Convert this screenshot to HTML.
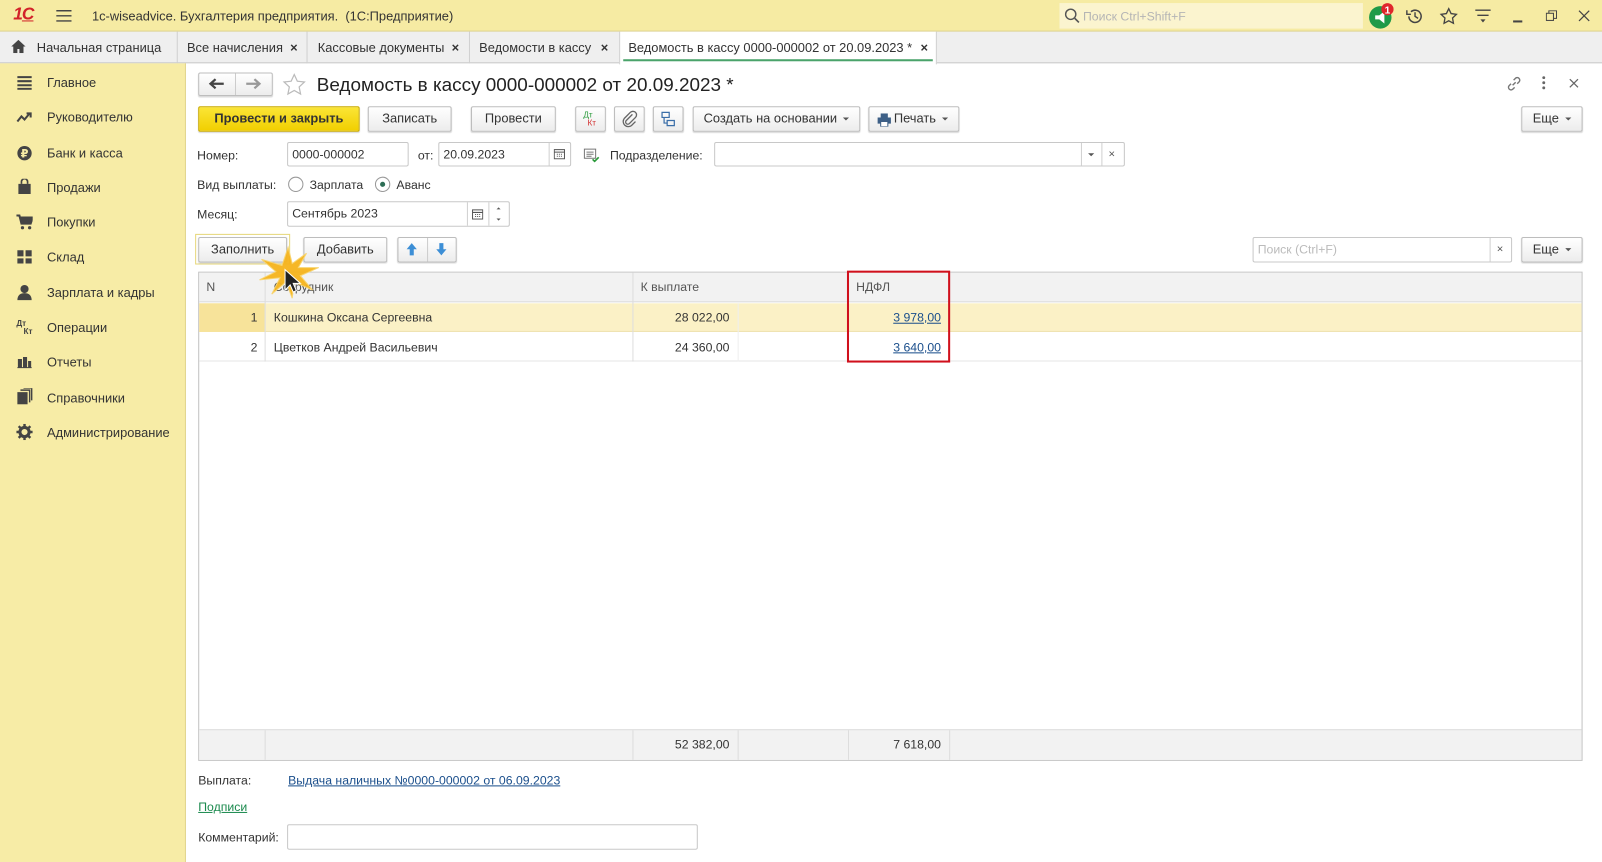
<!DOCTYPE html>
<html><head><meta charset="utf-8">
<style>
*{box-sizing:border-box;margin:0;padding:0}
html,body{width:1602px;height:862px;overflow:hidden;background:#fff}
#w{position:absolute;left:0;top:0;width:1568px;height:844px;transform:scale(1.02168,1.0213);transform-origin:0 0;font-family:"Liberation Sans",Arial,sans-serif;font-size:12.6px;color:#333}
.a{position:absolute}
.t{position:absolute;white-space:nowrap;line-height:16px}
.btn{position:absolute;border:1px solid #bdbdbd;border-radius:2px;background:linear-gradient(#fff,#ececec);box-shadow:0 1px 1px rgba(0,0,0,.15);text-align:center;line-height:23px;color:#333}
.inp{position:absolute;border:1px solid #c8c8c8;border-radius:2px;background:#fff;line-height:22px;padding-left:4px}
.side .t{left:46px}
.side svg{position:absolute;left:16px}
.cell{position:absolute;line-height:28px;white-space:nowrap}
.vl{position:absolute;width:1px;background:#ddd}
.tri{display:inline-block;width:0;height:0;border-left:3px solid transparent;border-right:3px solid transparent;border-top:3px solid #555;vertical-align:middle;margin-left:6px}
a{color:#1b4f8c;text-decoration:underline}
</style></head><body><div id="w">

<!-- title bar -->
<div class="a" style="left:0;top:0;width:1568px;height:31px;background:#f6eba3;border-bottom:1px solid #d9cf8a"></div>
<div class="t" style="left:13px;top:6px;font-size:17px;font-weight:bold;color:#d2232a;letter-spacing:-1px;font-style:italic">1<span style="text-decoration:underline">С</span></div>
<svg class="a" style="left:55px;top:9px" width="15" height="13"><path d="M0 1.5H15M0 6.5H15M0 11.5H15" stroke="#444" stroke-width="1.4"/></svg>
<div class="t" style="left:90px;top:8px">1c-wiseadvice. Бухгалтерия предприятия. &nbsp;(1С:Предприятие)</div>
<div class="a" style="left:1037px;top:3px;width:297px;height:25px;background:#fbf4cf"></div>
<svg class="a" style="left:1042px;top:8px" width="15" height="15"><circle cx="6" cy="6" r="5" stroke="#555" stroke-width="1.4" fill="none"/><path d="M10 10L14 14" stroke="#555" stroke-width="1.6"/></svg>
<div class="t" style="left:1060px;top:8px;color:#b5b5b5;font-size:12px">Поиск Ctrl+Shift+F</div>
<svg class="a" style="left:1338px;top:2px" width="28" height="28"><circle cx="13" cy="15" r="11" fill="#1f9a48"/><path d="M8 13h4l5-4v12l-5-4H8z" fill="#fff"/><circle cx="20" cy="7" r="6" fill="#e0262b"/><text x="20" y="11" font-size="10" font-weight="bold" fill="#fff" text-anchor="middle" font-family="Liberation Sans">1</text></svg>
<svg class="a" style="left:1376px;top:7px" width="18" height="18"><path d="M3 9a6 6 0 1 0 2-4.5" stroke="#444" stroke-width="1.5" fill="none"/><path d="M1 3v4h4" stroke="#444" stroke-width="1.4" fill="none"/><path d="M9 5v4l3 2" stroke="#444" stroke-width="1.4" fill="none"/></svg>
<svg class="a" style="left:1409px;top:7px" width="18" height="18"><path d="M9 1.5l2.3 4.8 5.2.7-3.8 3.6.9 5.2L9 13.3l-4.6 2.5.9-5.2L1.5 7l5.2-.7z" stroke="#444" stroke-width="1.3" fill="none"/></svg>
<svg class="a" style="left:1443px;top:8px" width="17" height="15"><path d="M1 2H16M3 7H14" stroke="#444" stroke-width="1.4"/><path d="M6 11h5l-2.5 3z" fill="#444"/></svg>
<div class="a" style="left:1481px;top:20px;width:9px;height:1.5px;background:#444"></div>
<svg class="a" style="left:1513px;top:10px" width="11" height="11"><rect x="0.5" y="3" width="7" height="7" stroke="#444" fill="none"/><path d="M3 3V0.5H10.5V8H8" stroke="#444" fill="none"/></svg>
<svg class="a" style="left:1545px;top:10px" width="11" height="11"><path d="M0.5 0.5L10.5 10.5M10.5 0.5L0.5 10.5" stroke="#444" stroke-width="1.2"/></svg>

<!-- tabs -->
<div class="a" style="left:0;top:31px;width:1568px;height:31px;background:#efefef;border-bottom:1px solid #c9c9c9"></div>
<svg class="a" style="left:11px;top:39px" width="14" height="13"><path d="M7 0L0 6.5h2V13h4V9h2v4h4V6.5h2z" fill="#444"/></svg>
<div class="t" style="left:36px;top:39px">Начальная страница</div>
<div class="vl" style="left:173px;top:31px;height:31px;background:#d0d0d0"></div>
<div class="t" style="left:183px;top:39px">Все начисления</div><div class="t" style="left:284px;top:39px;font-weight:bold">×</div>
<div class="vl" style="left:300px;top:31px;height:31px;background:#d0d0d0"></div>
<div class="t" style="left:311px;top:39px">Кассовые документы</div><div class="t" style="left:442px;top:39px;font-weight:bold">×</div>
<div class="vl" style="left:459px;top:31px;height:31px;background:#d0d0d0"></div>
<div class="t" style="left:469px;top:39px">Ведомости в кассу</div><div class="t" style="left:588px;top:39px;font-weight:bold">×</div>
<div class="a" style="left:606px;top:31px;width:311px;height:32px;background:#fff;border-left:1px solid #d0d0d0;border-right:1px solid #d0d0d0"></div>
<div class="a" style="left:610px;top:58px;width:303px;height:2px;background:#4aa36a"></div>
<div class="t" style="left:615px;top:39px">Ведомость в кассу 0000-000002 от 20.09.2023 *</div><div class="t" style="left:901px;top:39px;font-weight:bold">×</div>

<!-- sidebar -->
<div class="a side" style="left:0;top:62px;width:182px;height:782px;background:#f7eca6;border-right:1px solid #e0d48e">
<svg style="top:12px" width="16" height="14"><path d="M1 1.5H15M1 5.5H15M1 9.5H15M1 13H15" stroke="#444" stroke-width="2"/></svg><div class="t" style="top:11px">Главное</div>
<svg style="top:47px" width="16" height="12"><path d="M1 10l4-5 3 3 5-6M10 2h4v4" stroke="#444" stroke-width="2" fill="none"/></svg><div class="t" style="top:45px">Руководителю</div>
<svg style="top:80px" width="16" height="16"><circle cx="8" cy="8" r="7" fill="#444"/><text x="8" y="12" font-size="11" font-weight="bold" fill="#f7eca6" text-anchor="middle" font-family="DejaVu Sans">₽</text></svg><div class="t" style="top:80px">Банк и касса</div>
<svg style="top:113px" width="16" height="16"><path d="M2 5h12v10H2z" fill="#444"/><path d="M5 5V3a3 3 0 0 1 6 0v2" stroke="#444" stroke-width="1.6" fill="none"/></svg><div class="t" style="top:114px">Продажи</div>
<svg style="top:148px" width="16" height="15"><path d="M0 1h3l2 8h9l2-6H4" stroke="#444" stroke-width="2" fill="#444"/><circle cx="6" cy="13" r="1.6" fill="#444"/><circle cx="13" cy="13" r="1.6" fill="#444"/></svg><div class="t" style="top:148px">Покупки</div>
<svg style="top:182px" width="16" height="15"><path d="M1 1h6v6H1zM9 1h6v6H9zM1 9h6v5H1zM9 9h6v5H9z" fill="#444"/></svg><div class="t" style="top:182px">Склад</div>
<svg style="top:216px" width="16" height="16"><circle cx="8" cy="5" r="4" fill="#444"/><path d="M1 16c0-5 3-7 7-7s7 2 7 7z" fill="#444"/></svg><div class="t" style="top:217px">Зарплата и кадры</div>
<svg style="top:250px" width="18" height="16"><text x="0" y="7" font-size="8" fill="#444" font-family="Liberation Sans" font-weight="bold">Дт</text><text x="7" y="15" font-size="8" fill="#444" font-family="Liberation Sans" font-weight="bold">Кт</text></svg><div class="t" style="top:251px">Операции</div>
<svg style="top:286px" width="16" height="13"><path d="M1 12h14M2 4h3v8H2zM7 2h3v10H7zM12 6h2v6h-2z" stroke="#444" stroke-width="1" fill="#444"/></svg><div class="t" style="top:285px">Отчеты</div>
<svg style="top:318px" width="16" height="16"><path d="M1 4h10v12H1z" fill="#444"/><path d="M4 2h9v12M7 0h8v12" stroke="#444" stroke-width="1.4" fill="none"/></svg><div class="t" style="top:320px">Справочники</div>
<svg style="top:353px" width="16" height="16"><circle cx="8" cy="8" r="4.5" stroke="#444" stroke-width="3" fill="none"/><path d="M8 0v3M8 13v3M0 8h3M13 8h3M2.3 2.3l2.2 2.2M11.5 11.5l2.2 2.2M2.3 13.7l2.2-2.2M11.5 4.5l2.2-2.2" stroke="#444" stroke-width="2.4"/></svg><div class="t" style="top:354px">Администрирование</div>
</div>

<!-- header row -->
<div class="btn" style="left:194px;top:71px;width:73px;height:23px"></div>
<div class="vl" style="left:230px;top:72px;height:21px;background:#ccc"></div>
<svg class="a" style="left:204px;top:76px" width="16" height="12"><path d="M15 6H3M7 1.5L2 6l5 4.5" stroke="#444" stroke-width="2.2" fill="none"/></svg>
<svg class="a" style="left:240px;top:76px" width="16" height="12"><path d="M1 6h12M9 1.5L14 6l-5 4.5" stroke="#999" stroke-width="2.2" fill="none"/></svg>
<svg class="a" style="left:276px;top:71px" width="24" height="24"><path d="M12 2l3 6.5 7 .8-5.2 4.8 1.4 7L12 17.6 5.8 21.1l1.4-7L2 9.3l7-.8z" stroke="#bbb" stroke-width="1.2" fill="none"/></svg>
<div class="t" style="left:310px;top:72px;font-size:18.5px;line-height:22px;color:#222">Ведомость в кассу 0000-000002 от 20.09.2023 *</div>
<svg class="a" style="left:1474px;top:74px" width="16" height="16"><path d="M6.5 9.5l3-3M5 8l-2 2a2.5 2.5 0 0 0 3.5 3.5l2-2M11 8l2-2A2.5 2.5 0 0 0 9.5 2.5l-2 2" stroke="#777" stroke-width="1.4" fill="none"/></svg>
<svg class="a" style="left:1509px;top:74px" width="4" height="15"><circle cx="2" cy="2" r="1.4" fill="#666"/><circle cx="2" cy="7" r="1.4" fill="#666"/><circle cx="2" cy="12" r="1.4" fill="#666"/></svg>
<svg class="a" style="left:1536px;top:77px" width="9" height="9"><path d="M.5 .5l8 8M8.5 .5l-8 8" stroke="#666" stroke-width="1.2"/></svg>

<!-- toolbar -->
<div class="btn" style="left:194px;top:104px;width:158px;height:25px;background:linear-gradient(#fbe536,#f1cf00);border-color:#c9aa00;font-weight:bold;color:#333">Провести и закрыть</div>
<div class="btn" style="left:360px;top:104px;width:82px;height:25px">Записать</div>
<div class="btn" style="left:461px;top:104px;width:83px;height:25px">Провести</div>
<div class="btn" style="left:563px;top:104px;width:30px;height:25px"><svg width="28" height="23"><text x="7" y="10" font-size="8" fill="#2a9a3a" font-family="Liberation Sans">Дт</text><text x="11" y="18" font-size="8" fill="#d23030" font-family="Liberation Sans">Кт</text></svg></div>
<div class="btn" style="left:601px;top:104px;width:30px;height:25px"><svg width="28" height="23"><path d="M17 7l-6 6a2 2 0 0 0 3 3l6-6a3.5 3.5 0 0 0-5-5l-6 6a5 5 0 0 0 7 7l4-4" stroke="#666" stroke-width="1.3" fill="none"/></svg></div>
<div class="btn" style="left:639px;top:104px;width:30px;height:25px"><svg width="28" height="23"><path d="M8 5h7v5H8zM13 13h7v5h-7zM10 10v5.5h3" stroke="#3a6ea8" stroke-width="1.2" fill="none"/></svg></div>
<div class="btn" style="left:678px;top:104px;width:164px;height:25px">Создать на основании<span class="tri"></span></div>
<div class="btn" style="left:850px;top:104px;width:89px;height:25px;padding-left:14px">Печать<span class="tri"></span><svg class="a" style="left:7px;top:6px" width="15" height="13"><path d="M4 0h7v4H4zM1 4h13v6H1z" fill="#3d5f86"/><path d="M4 8h7v5H4z" fill="#fff" stroke="#3d5f86"/></svg></div>
<div class="btn" style="left:1489px;top:104px;width:60px;height:25px">Еще<span class="tri"></span></div>

<!-- fields -->
<div class="t" style="left:193px;top:144px;font-size:12px">Номер:</div>
<div class="inp" style="left:281px;top:139px;width:119px;height:24px;font-size:12px">0000-000002</div>
<div class="t" style="left:409px;top:144px;font-size:12px">от:</div>
<div class="inp" style="left:429px;top:139px;width:130px;height:24px;font-size:12px">20.09.2023</div>
<div class="vl" style="left:537px;top:140px;height:22px;background:#d0d0d0"></div>
<svg class="a" style="left:542px;top:145px" width="11" height="11"><rect x=".5" y="1.5" width="10" height="9" stroke="#555" fill="none"/><path d="M.5 4h10M3 6h1M5 6h1M7 6h1M3 8h1M5 8h1M7 8h1" stroke="#555"/></svg>
<svg class="a" style="left:571px;top:145px" width="16" height="14"><path d="M1 1h11v9H1zM3 4h7M3 6h7M3 8h5" stroke="#777" fill="none"/><path d="M9 11l2 2 4-4" stroke="#2a9a3a" stroke-width="1.6" fill="none"/></svg>
<div class="t" style="left:597px;top:144px;font-size:12px">Подразделение:</div>
<div class="inp" style="left:699px;top:139px;width:402px;height:24px"></div>
<div class="vl" style="left:1058px;top:140px;height:22px;background:#d0d0d0"></div>
<div class="vl" style="left:1078px;top:140px;height:22px;background:#d0d0d0"></div>
<div class="a" style="left:1065px;top:150px;border-left:3px solid transparent;border-right:3px solid transparent;border-top:3px solid #555"></div>
<div class="t" style="left:1085px;top:143px;font-size:11px;color:#555">×</div>

<div class="t" style="left:193px;top:173px;font-size:12px">Вид выплаты:</div>
<div class="a" style="left:282px;top:173px;width:15px;height:15px;border:1px solid #999;border-radius:50%;background:#fff"></div>
<div class="t" style="left:303px;top:173px;font-size:12px">Зарплата</div>
<div class="a" style="left:367px;top:173px;width:15px;height:15px;border:1px solid #999;border-radius:50%;background:#fff"></div>
<div class="a" style="left:372px;top:178px;width:5px;height:5px;border-radius:50%;background:#2d6e55"></div>
<div class="t" style="left:388px;top:173px;font-size:12px">Аванс</div>

<div class="t" style="left:193px;top:202px;font-size:12px">Месяц:</div>
<div class="inp" style="left:281px;top:197px;width:218px;height:25px;font-size:12px">Сентябрь 2023</div>
<div class="vl" style="left:457px;top:198px;height:23px;background:#d0d0d0"></div>
<div class="vl" style="left:478px;top:198px;height:23px;background:#d0d0d0"></div>
<svg class="a" style="left:462px;top:204px" width="11" height="11"><rect x=".5" y="1.5" width="10" height="9" stroke="#555" fill="none"/><path d="M.5 4h10M3 6h1M5 6h1M7 6h1M3 8h1M5 8h1M7 8h1" stroke="#555"/></svg>
<div class="a" style="left:486px;top:203px;border-left:2px solid transparent;border-right:2px solid transparent;border-bottom:2px solid #555"></div>
<div class="a" style="left:486px;top:214px;border-left:2px solid transparent;border-right:2px solid transparent;border-top:2px solid #555"></div>

<!-- table buttons -->
<div class="a" style="left:191px;top:229px;width:93px;height:30px;border:1px solid #e6d77a"></div>
<div class="btn" style="left:194px;top:232px;width:87px;height:25px">Заполнить</div>
<div class="btn" style="left:297px;top:232px;width:82px;height:25px">Добавить</div>
<div class="btn" style="left:389px;top:232px;width:58px;height:25px"></div>
<div class="vl" style="left:418px;top:233px;height:23px;background:#ccc"></div>
<svg class="a" style="left:397px;top:237px" width="12" height="14"><path d="M6 1L1 7h3v6h4V7h3z" fill="#3d8fd6"/></svg>
<svg class="a" style="left:426px;top:237px" width="12" height="14"><path d="M6 13L1 7h3V1h4v6h3z" fill="#3d8fd6"/></svg>
<div class="inp" style="left:1226px;top:232px;width:254px;height:25px;font-size:12px;color:#bbb">Поиск (Ctrl+F)</div>
<div class="vl" style="left:1458px;top:233px;height:23px;background:#d0d0d0"></div>
<div class="t" style="left:1465px;top:236px;font-size:11px;color:#555">×</div>
<div class="btn" style="left:1489px;top:232px;width:60px;height:25px">Еще<span class="tri"></span></div>

<!-- table -->
<div class="a" style="left:194px;top:266px;width:1355px;height:479px;border:1px solid #c2c2c2;background:#fff"></div>
<div class="a" style="left:195px;top:267px;width:1353px;height:29px;background:#f2f2f2;border-bottom:1px solid #dcdcdc"></div>
<div class="a" style="left:195px;top:297px;width:1353px;height:28px;background:#fbf1c6;border-bottom:1px solid #eee2b0"></div>
<div class="a" style="left:195px;top:297px;width:64px;height:28px;background:#f7e39a"></div>
<div class="a" style="left:195px;top:325px;width:1353px;height:29px;border-bottom:1px solid #e6e6e6"></div>
<div class="a" style="left:195px;top:714px;width:1353px;height:30px;background:#f2f2f2;border-top:1px solid #dcdcdc"></div>
<div class="vl" style="left:259px;top:267px;height:87px"></div>
<div class="vl" style="left:619px;top:267px;height:87px"></div>
<div class="vl" style="left:722px;top:297px;height:57px;background:#eee"></div>
<div class="vl" style="left:830px;top:267px;height:87px"></div>
<div class="vl" style="left:929px;top:267px;height:29px"></div>
<div class="vl" style="left:259px;top:715px;height:29px"></div>
<div class="vl" style="left:619px;top:715px;height:29px"></div>
<div class="vl" style="left:722px;top:715px;height:29px"></div>
<div class="vl" style="left:830px;top:715px;height:29px"></div>
<div class="vl" style="left:929px;top:715px;height:29px"></div>
<div class="cell" style="left:202px;top:267px;font-size:12px;color:#555">N</div>
<div class="cell" style="left:268px;top:267px;font-size:12px;color:#555">Сотрудник</div>
<div class="cell" style="left:627px;top:267px;font-size:12px;color:#555">К выплате</div>
<div class="cell" style="left:838px;top:267px;font-size:12px;color:#555">НДФЛ</div>
<div class="cell" style="left:200px;width:52px;text-align:right;top:297px;font-size:12px">1</div>
<div class="cell" style="left:268px;top:297px;font-size:12px">Кошкина Оксана Сергеевна</div>
<div class="cell" style="left:620px;width:94px;text-align:right;top:297px;font-size:12px">28 022,00</div>
<div class="cell" style="left:832px;width:89px;text-align:right;top:297px;font-size:12px"><a>3 978,00</a></div>
<div class="cell" style="left:200px;width:52px;text-align:right;top:326px;font-size:12px">2</div>
<div class="cell" style="left:268px;top:326px;font-size:12px">Цветков Андрей Васильевич</div>
<div class="cell" style="left:620px;width:94px;text-align:right;top:326px;font-size:12px">24 360,00</div>
<div class="cell" style="left:832px;width:89px;text-align:right;top:326px;font-size:12px"><a>3 640,00</a></div>
<div class="cell" style="left:620px;width:94px;text-align:right;top:715px;font-size:12px">52 382,00</div>
<div class="cell" style="left:832px;width:89px;text-align:right;top:715px;font-size:12px">7 618,00</div>
<div class="a" style="left:829px;top:265px;width:101px;height:90px;border:2px solid #d0101c"></div>

<!-- starburst + cursor -->
<svg class="a" style="left:250px;top:240px" width="64" height="54"><polygon points="32,2 36,18 50,8 42,22 62,22 44,30 56,44 38,36 36,52 30,36 16,48 24,32 4,34 20,26 6,14 26,20" fill="#f6b41c" stroke="#f8d36a" stroke-width="1" opacity=".95"/><path d="M29 24v20l5-5 3 7 3-1.5-3-7h7z" fill="#222" stroke="#fff" stroke-width="1"/></svg>

<!-- bottom -->
<div class="t" style="left:194px;top:756px;font-size:12px">Выплата:</div>
<div class="t" style="left:282px;top:756px;font-size:12px"><a>Выдача наличных №0000-000002 от 06.09.2023</a></div>
<div class="t" style="left:194px;top:782px;font-size:12px"><a style="color:#1b8a4e">Подписи</a></div>
<div class="t" style="left:194px;top:812px;font-size:12px">Комментарий:</div>
<div class="inp" style="left:281px;top:807px;width:402px;height:25px"></div>

</div></body></html>
